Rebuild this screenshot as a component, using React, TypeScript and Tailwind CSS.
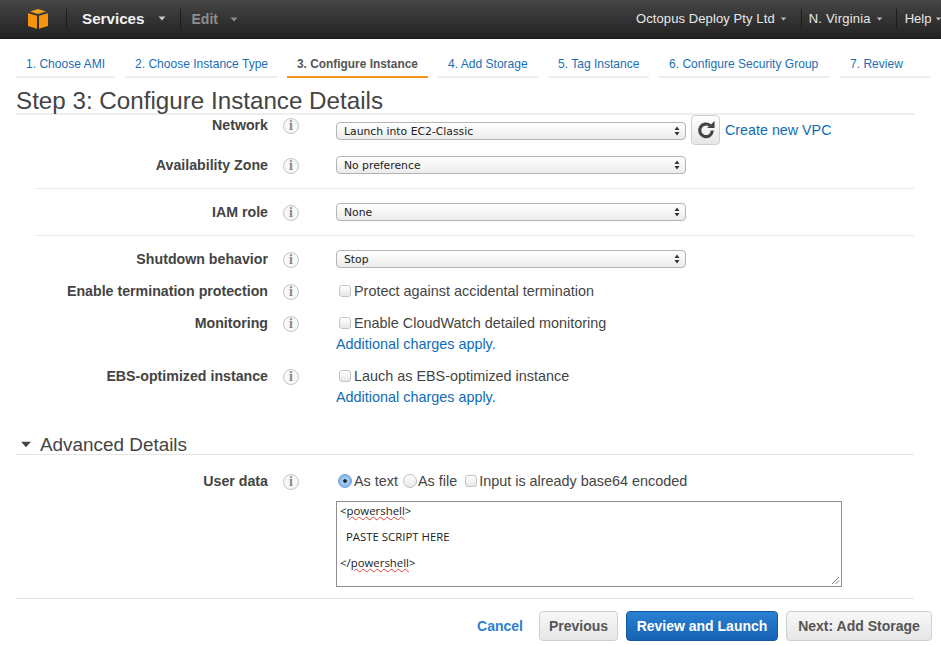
import { ReactNode } from "react";

const steps = [
  { label: "1. Choose AMI", width: "w-[99px]" },
  { label: "2. Choose Instance Type", width: "w-[152px]" },
  { label: "3. Configure Instance", width: "w-[141px]", active: true },
  { label: "4. Add Storage", width: "w-[100px]" },
  { label: "5. Tag Instance", width: "w-[101px]" },
  { label: "6. Configure Security Group", width: "w-[171px]" },
  { label: "7. Review", width: "w-[90px]" },
];

function Caret({ className }: { className: string }) {
  return (
    <svg viewBox="0 0 8 5" className={className} fill="currentColor">
      <path d="M0.5 0.5h7L4 4.5z" />
    </svg>
  );
}

function CubeLogo() {
  return (
    <svg viewBox="0 0 20 20" className="h-[20px] w-[20px]">
      <path d="M10 0 L18 2.6 L10 5 L2 2.6 Z" fill="#f7a01c" />
      <path d="M0 4.2 L9 6.8 V19.8 L0 17 Z" fill="#f7940f" />
      <path d="M20 4.2 L11 6.8 V19.8 L20 17 Z" fill="#f7940f" />
    </svg>
  );
}

function NavDivider({ className }: { className: string }) {
  return <div className={`h-[20px] w-px shrink-0 bg-[#1c1c1c] ${className}`} />;
}

function InfoIcon() {
  return (
    <span className="flex h-[16px] w-[16px] shrink-0 items-center justify-center rounded-full border border-[#c4c4c4] bg-[#f8f8f8] font-['Liberation_Serif',serif] text-[14px] font-bold leading-none text-[#888]">
      i
    </span>
  );
}

function Row({ label, top, children }: { label: string; top?: string; children: ReactNode }) {
  return (
    <div className={`flex items-start ${top ?? ""}`}>
      <div className="w-[268px] shrink-0 text-right text-[14.2px] font-bold leading-[18px] text-[#444]">{label}</div>
      <div className="ml-[15px] h-[19px] w-[53px] shrink-0 pt-[2px]">
        <InfoIcon />
      </div>
      <div className="min-w-0 flex-1">{children}</div>
    </div>
  );
}

function SelectBox({ value }: { value: string }) {
  return (
    <div className="relative h-[18px] w-[350px] shrink-0">
      <select
        defaultValue={value}
        className="block h-[18px] w-full appearance-none rounded-[4px] border border-[#b4b4b4] bg-gradient-to-b from-white to-[#ececec] pl-[7px] pt-[1px] font-['DejaVu_Sans',sans-serif] text-[10.8px] leading-[16px] text-[#222]"
      >
        <option>{value}</option>
      </select>
      <svg viewBox="0 0 6 10" className="absolute right-[6px] top-[4px] h-[10px] w-[6px] text-[#333]" fill="currentColor">
        <path d="M3 0.5 5.5 4h-5zM3 9.5 0.5 6h5z" />
      </svg>
    </div>
  );
}

function CheckLine({ text }: { text: string }) {
  return (
    <label className="flex items-center text-[14.4px] leading-[18px] text-[#444]">
      <input
        type="checkbox"
        className="ml-[3px] mr-[3px] h-[12px] w-[12px] appearance-none rounded-[3px] border border-[#c4c4c4] bg-gradient-to-b from-white to-[#e8e8e8]"
      />
      {text}
    </label>
  );
}

function ChargesLink() {
  return <a className="mt-[3px] block text-[14.4px] leading-[18px] text-[#0f6cb5]" href="#">Additional charges apply.</a>;
}

function Squiggle({ children }: { children: ReactNode }) {
  return <span className="underline decoration-[#e0413a] decoration-wavy decoration-1 underline-offset-[1px]">{children}</span>;
}

export default function App() {
  return (
    <div className="flex h-[645px] w-[941px] flex-col overflow-hidden bg-white font-['Liberation_Sans',sans-serif]">
      <header className="flex h-[39px] shrink-0 items-center overflow-hidden border-b border-[#1a1a1a] bg-gradient-to-b from-[#454545] to-[#232323] text-[13px]">
        <div className="ml-[28px] mr-[18px] shrink-0">
          <CubeLogo />
        </div>
        <NavDivider className="" />
        <div className="ml-[15px] flex shrink-0 items-center text-[15.2px] font-bold text-[#f2f2f2]">
          Services
          <Caret className="ml-[13px] h-[5px] w-[8px] text-[#c8c8c8]" />
        </div>
        <NavDivider className="ml-[14px]" />
        <div className="ml-[11px] flex shrink-0 items-center text-[14px] font-bold text-[#8e8e8e]">
          Edit
          <Caret className="ml-[12px] h-[5px] w-[8px] text-[#8e8e8e]" />
        </div>
        <div className="ml-[398px] flex shrink-0 items-center text-[#e8e8e8]">
          <span className="whitespace-nowrap tracking-[0.1px]">Octopus Deploy Pty Ltd</span>
          <Caret className="ml-[5px] h-[4px] w-[7px] text-[#c0c0c0]" />
          <NavDivider className="ml-[14px]" />
          <span className="ml-[7px] whitespace-nowrap tracking-[0.2px]">N. Virginia</span>
          <Caret className="ml-[5px] h-[4px] w-[7px] text-[#c0c0c0]" />
          <NavDivider className="ml-[13px]" />
          <span className="ml-[8px]">Help</span>
          <Caret className="ml-[4px] h-[4px] w-[7px] text-[#c0c0c0]" />
        </div>
      </header>

      <nav className="ml-[16px] mt-[11px] flex gap-[10px]">
        {steps.map((step) => (
          <div
            key={step.label}
            className={`h-[28px] ${step.width} shrink-0 whitespace-nowrap border-b-2 pl-[10px] pt-[6px] leading-[16px] ${
              step.active ? "border-[#f6931d] text-[11.9px] font-bold text-[#555]" : "border-[#eeeeee] text-[12.05px] text-[#1a6fb5]"
            }`}
          >
            {step.label}
          </div>
        ))}
      </nav>

      <div className="ml-[16px] mr-[27px] mt-[9px] h-[28px] shrink-0 border-b-2 border-[#eeeeee]">
        <h1 className="text-[24.2px] font-normal leading-[27px] text-[#444]">Step 3: Configure Instance Details</h1>
      </div>

      <main className="min-h-0 flex-1 overflow-hidden pt-[1px]">
        <Row label="Network">
          <div className="flex h-[24px] items-start">
            <div className="mt-[6px]">
              <SelectBox value="Launch into EC2-Classic" />
            </div>
            <button className="-mt-[1px] ml-[5px] flex h-[30px] w-[29px] shrink-0 items-center justify-center rounded-[4px] border border-[#cfcfcf] bg-gradient-to-b from-white to-[#e6e6e6] text-[#444]">
              <svg viewBox="0 0 16 16" className="h-[18px] w-[18px]" fill="none" stroke="currentColor" strokeWidth="2.8">
                <path d="M13.6 8.5a5.6 5.6 0 1 1-1.9-4.4" />
                <path d="M9 6.2h6.6V0z" fill="currentColor" stroke="none" />
              </svg>
            </button>
            <a href="#" className="ml-[5px] mt-[5px] whitespace-nowrap text-[14.3px] leading-[18px] text-[#0f6cb5]">Create new VPC</a>
          </div>
        </Row>
        <Row label="Availability Zone" top="mt-[16px]">
          <SelectBox value="No preference" />
        </Row>
        <div className="ml-[36px] mr-[27px] mt-[13px] border-t border-[#eaeaea]" />
        <Row label="IAM role" top="mt-[14px]">
          <SelectBox value="None" />
        </Row>
        <div className="ml-[36px] mr-[27px] mt-[13px] border-t border-[#eaeaea]" />
        <Row label="Shutdown behavior" top="mt-[14px]">
          <SelectBox value="Stop" />
        </Row>
        <Row label="Enable termination protection" top="mt-[13px]">
          <CheckLine text="Protect against accidental termination" />
        </Row>
        <Row label="Monitoring" top="mt-[13px]">
          <CheckLine text="Enable CloudWatch detailed monitoring" />
          <ChargesLink />
        </Row>
        <Row label="EBS-optimized instance" top="mt-[14px]">
          <CheckLine text="Lauch as EBS-optimized instance" />
          <ChargesLink />
        </Row>

        <div className="ml-[16px] mr-[27px] mt-[26px] flex h-[23px] items-start border-b border-[#e4e4e4] pt-[2px]">
          <Caret className="ml-[4px] mt-[7px] h-[7px] w-[12px] text-[#444]" />
          <span className="ml-[8px] text-[18.9px] leading-[22px] text-[#444]">Advanced Details</span>
        </div>

        <Row label="User data" top="mt-[17px]">
          <div className="flex items-center text-[14.4px] leading-[18px] text-[#444]">
            <input
              type="radio"
              defaultChecked
              className="ml-[2px] mr-[2px] h-[14px] w-[14px] appearance-none rounded-full border border-[#6f9fd4] bg-[radial-gradient(circle,#1b2a3a_0_1.5px,#a9cdf3_2.2px,#6aa6e4_100%)]"
            />
            As text
            <input
              type="radio"
              className="ml-[5px] mr-[1px] h-[14px] w-[14px] appearance-none rounded-full border border-[#c0c0c0] bg-gradient-to-b from-white to-[#e8e8e8]"
            />
            As file
            <input
              type="checkbox"
              className="ml-[8px] mr-[2px] h-[12px] w-[12px] appearance-none rounded-[3px] border border-[#c4c4c4] bg-gradient-to-b from-white to-[#e8e8e8]"
            />
            Input is already base64 encoded
          </div>
          <div className="relative mt-[11px] h-[86px] w-[506px] border border-[#8f8f8f] pl-[3px] pt-[2px] font-['Open_Sans',sans-serif] text-[11.4px] leading-[13px] text-[#222]">
            <div>&lt;<Squiggle>powershell</Squiggle>&gt;</div>
            <div className="mt-[13px] pl-[6px]">PASTE SCRIPT HERE</div>
            <div className="mt-[13px]">&lt;/<Squiggle>powershell</Squiggle>&gt;</div>
            <svg viewBox="0 0 9 9" className="absolute bottom-[1px] right-[1px] h-[9px] w-[9px]" stroke="#777" fill="none">
              <path d="M1 8 8 1M4.5 8 8 4.5" />
            </svg>
          </div>
        </Row>

        <div className="ml-[16px] mr-[27px] mt-[11px] border-t border-[#e4e4e4]" />

        <footer className="mr-[9px] mt-[12px] flex items-center justify-end text-[14px] font-bold">
          <a href="#" className="mr-[16px] text-[#2a7fd0]">Cancel</a>
          <button className="mr-[8px] h-[30px] w-[79px] rounded-[4px] border border-[#cfcfcf] bg-gradient-to-b from-[#f8f8f8] to-[#e6e6e6] text-[#555]">Previous</button>
          <button className="mr-[8px] h-[30px] w-[152px] rounded-[4px] border border-[#12589f] bg-gradient-to-b from-[#2a80d2] to-[#1663b3] text-white">Review and Launch</button>
          <button className="h-[30px] w-[146px] rounded-[4px] border border-[#cfcfcf] bg-gradient-to-b from-[#f8f8f8] to-[#e6e6e6] text-[#555]">Next: Add Storage</button>
        </footer>
      </main>
    </div>
  );
}
